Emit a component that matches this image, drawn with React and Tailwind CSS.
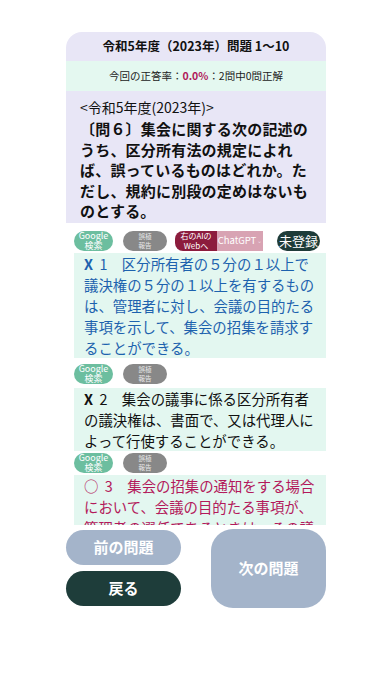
import React from "react";

const font = { fontFamily: '"Noto Sans CJK JP", "Noto Sans", sans-serif' };

function Pills({ full }) {
  return (
    <div className="flex items-center h-5 my-[2px]">
      <div className="w-[39px] h-5 rounded-full bg-[#6cbe9f] text-white flex flex-col items-center justify-center text-[9px] leading-[9.5px]">
        <span>Google</span>
        <span>検索</span>
      </div>
      <div className="ml-[10px] w-[44px] h-5 rounded-full bg-[#888888] text-[#e8e8e8] flex flex-col items-center justify-center text-[6.5px] leading-[8.5px]">
        <span>誤植</span>
        <span>報告</span>
      </div>
      {full && (
        <>
          <div className="ml-2 w-[42px] h-5 rounded-l-[8px] bg-[#8c1c3d] text-white flex flex-col items-center justify-center text-[8px] leading-[9.5px]">
            <span>右のAIの</span>
            <span>Webへ</span>
          </div>
          <div className="w-[46px] h-5 bg-[#d8a3b3] text-white flex items-center justify-center text-[9.5px]">
            ChatGPT<span className="text-[6px] ml-[1px] text-[#f0dde3]">⌄</span>
          </div>
          <div className="ml-auto mr-[6px] w-[43px] h-5 rounded-full bg-[#1e3c39] text-white flex items-center justify-center text-[13px]">
            未登録
          </div>
        </>
      )}
    </div>
  );
}

export default function App() {
  return (
    <div className="w-[392px] h-[696px] bg-white" style={font}>
      <div className="w-[260px] mx-auto pt-8">
        <div className="h-[29px] rounded-t-[16px] bg-[#e8e6f6] flex items-center justify-center text-[12.5px] font-bold text-[#111]">
          令和5年度（2023年）問題 1〜10
        </div>
        <div className="h-[30px] bg-[#e4f8f0] flex items-center justify-center text-[10.5px] text-[#222]">
          今回の正答率：<span className="text-[#b0185a] font-bold">0.0%</span>：2問中0問正解
        </div>
        <div className="h-[434px] overflow-hidden">
          <div className="bg-[#e8e6f6] px-[14px] pt-1 pb-[1px] text-[#111]">
            <div className="text-[14px] leading-[24px]">&lt;令和5年度(2023年)&gt;</div>
            <div className="text-[15px] leading-[20.5px] font-bold tracking-[0.2px]">
              〔問６〕集会に関する次の記述のうち、区分所有法の規定によれば、誤っているものはどれか。ただし、規約に別段の定めはないものとする。
            </div>
          </div>
          <div className="pl-2 pt-[6px]">
            <Pills full />
            <div className="bg-[#e3f7f0] px-[10px] text-[14.4px] leading-[21px] text-[#1d62ae]">
              <span className="font-bold">X</span>{"\u00a0\u00a0"}1　区分所有者の５分の１以上で議決権の５分の１以上を有するものは、管理者に対し、会議の目的たる事項を示して、集会の招集を請求することができる。
            </div>
            <div className="h-1" />
            <Pills />
            <div className="h-[2px]" />
            <div className="bg-[#e3f7f0] px-[10px] text-[14.4px] leading-[21px] text-[#111]">
              <span className="font-bold">X</span>{"\u00a0\u00a0"}2　集会の議事に係る区分所有者の議決権は、書面で、又は代理人によって行使することができる。
            </div>
            <Pills />
            <div className="bg-[#e3f7f0] px-[10px] text-[14.4px] leading-[21px] text-[#b3195b]">
              ○{"\u00a0\u00a0"}3　集会の招集の通知をする場合において、会議の目的たる事項が、管理者の選任であるときは、その議案の要領をも通知しなければならない。
            </div>
          </div>
        </div>
        <div className="flex justify-between mt-1">
          <div className="w-[115px] flex flex-col gap-[6px] pt-[1px]">
            <div className="h-[35px] rounded-full bg-[#a4b4ca] text-white font-bold text-[15px] flex items-center justify-center">
              前の問題
            </div>
            <div className="h-[35px] rounded-full bg-[#1e3d3a] text-white font-bold text-[15px] flex items-center justify-center">
              戻る
            </div>
          </div>
          <div className="w-[115px] h-[79px] rounded-[22px] bg-[#a4b4ca] text-white font-bold text-[15px] flex items-center justify-center">
            次の問題
          </div>
        </div>
      </div>
    </div>
  );
}
